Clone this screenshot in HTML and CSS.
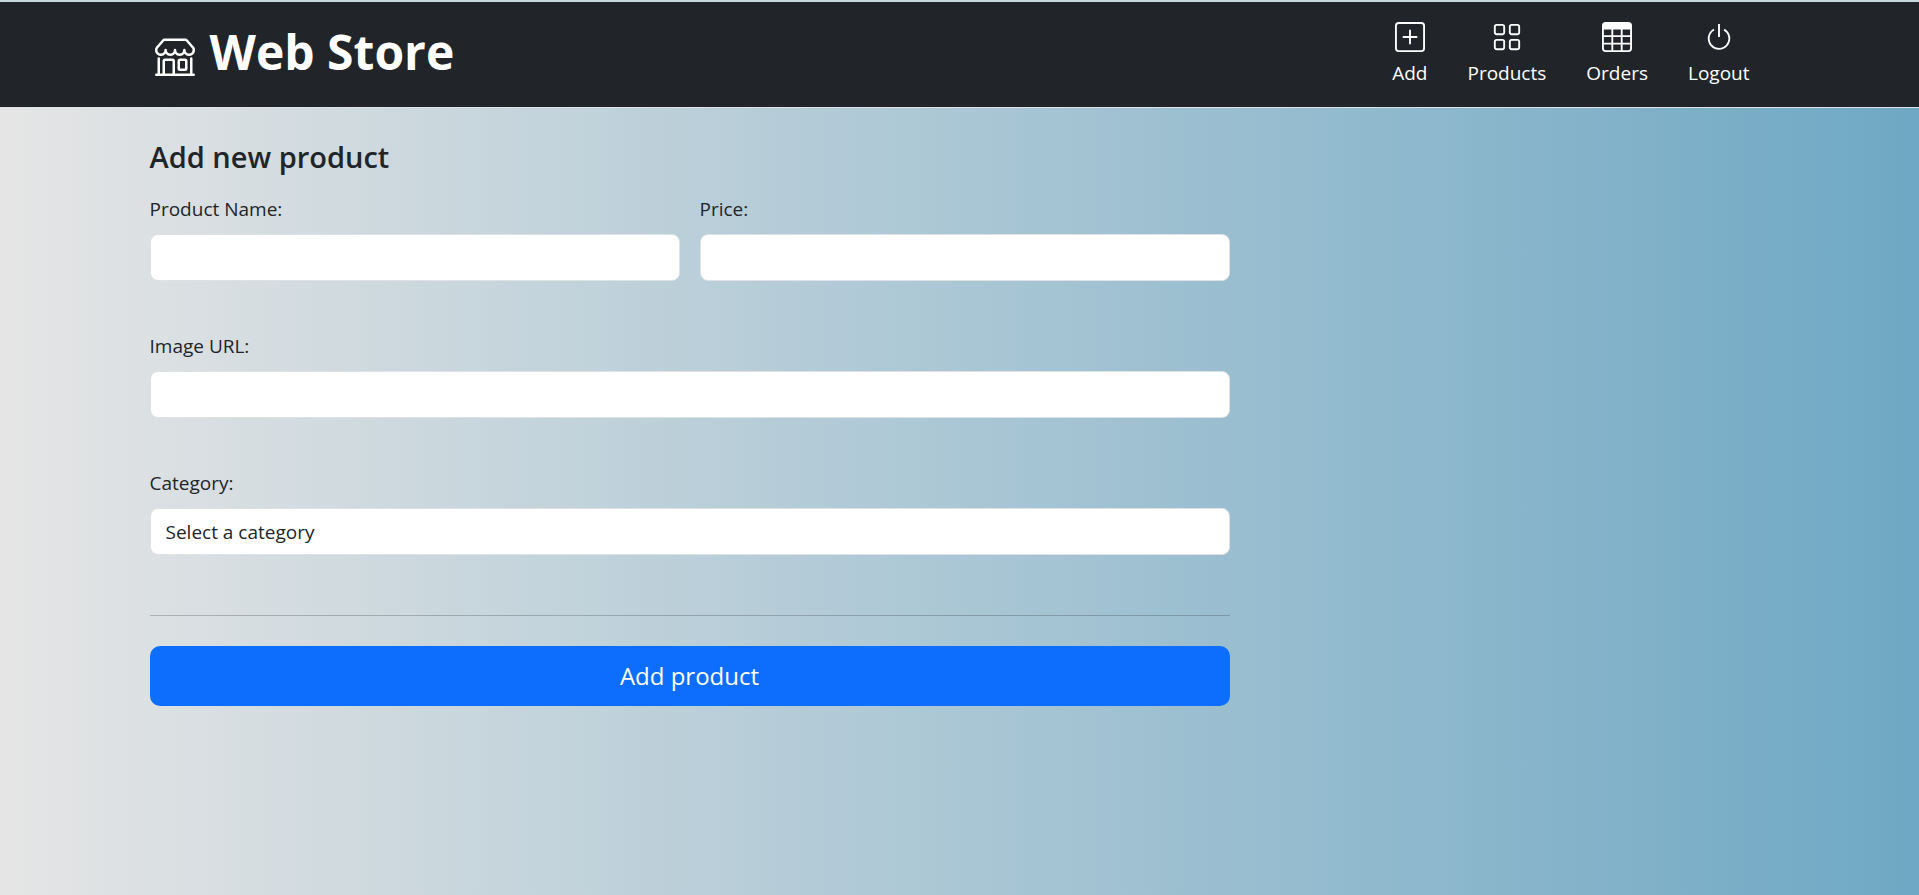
FILE: index.html
```html
<!DOCTYPE html>
<html lang="en">
<head>
<meta charset="utf-8">
<title>Web Store</title>
<link rel="stylesheet" href="styles.css">
</head>
<body>
<header class="site-header">
  <div class="container header-row">
    <a class="brand" href="#">
      <svg class="brand-icon" viewBox="0 0 16 16" fill="currentColor" aria-hidden="true"><path d="M2.97 1.35A1 1 0 0 1 3.73 1h8.54a1 1 0 0 1 .76.35l2.609 3.044A1.500 1.500 0 0 1 16 5.370v.255a2.375 2.375 0 0 1-4.250 1.458A2.370 2.370 0 0 1 9.875 8 2.370 2.370 0 0 1 8 7.083 2.370 2.370 0 0 1 6.125 8a2.370 2.370 0 0 1-1.875-.917A2.375 2.375 0 0 1 0 5.625V5.370a1.500 1.500 0 0 1 .361-.976zm1.780 4.275a1.375 1.375 0 0 0 2.750 0 .5.5 0 0 1 1 0 1.375 1.375 0 0 0 2.750 0 .5.5 0 0 1 1 0 1.375 1.375 0 1 0 2.750 0V5.370a.5.5 0 0 0-.120-.325L12.270 2H3.730L1.120 5.045A.5.5 0 0 0 1 5.370v.255a1.375 1.375 0 0 0 2.750 0 .5.5 0 0 1 1 0M1.500 8.500A.5.5 0 0 1 2 9v6h1v-5a1 1 0 0 1 1-1h3a1 1 0 0 1 1 1v5h6V9a.5.5 0 0 1 1 0v6h.5a.5.5 0 0 1 0 1H.5a.5.5 0 0 1 0-1H1V9a.5.5 0 0 1 .5-.5M4 15h3v-5H4zm5-5a1 1 0 0 1 1-1h2a1 1 0 0 1 1 1v3a1 1 0 0 1-1 1h-2a1 1 0 0 1-1-1zm3 0h-2v3h2z"/></svg>
      <span class="brand-name">Web Store</span>
    </a>
    <nav class="nav">
      <a class="nav-link" href="#"><svg class="nav-icon" viewBox="0 0 16 16" fill="currentColor" aria-hidden="true"><path d="M14 1a1 1 0 0 1 1 1v12a1 1 0 0 1-1 1H2a1 1 0 0 1-1-1V2a1 1 0 0 1 1-1zM2 0a2 2 0 0 0-2 2v12a2 2 0 0 0 2 2h12a2 2 0 0 0 2-2V2a2 2 0 0 0-2-2z"/><path d="M8 4a.5.5 0 0 1 .5.5v3h3a.5.5 0 0 1 0 1h-3v3a.5.5 0 0 1-1 0v-3h-3a.5.5 0 0 1 0-1h3v-3A.5.5 0 0 1 8 4"/></svg>Add</a>
      <a class="nav-link" href="#"><svg class="nav-icon" viewBox="0 0 16 16" fill="currentColor" aria-hidden="true"><path d="M1 2.500A1.500 1.500 0 0 1 2.500 1h3A1.500 1.500 0 0 1 7 2.500v3A1.500 1.500 0 0 1 5.500 7h-3A1.500 1.500 0 0 1 1 5.500zM2.500 2a.5.5 0 0 0-.5.5v3a.5.5 0 0 0 .5.5h3a.5.5 0 0 0 .5-.5v-3a.5.5 0 0 0-.5-.5zm6.500.5A1.500 1.500 0 0 1 10.500 1h3A1.500 1.500 0 0 1 15 2.500v3A1.500 1.500 0 0 1 13.500 7h-3A1.500 1.500 0 0 1 9 5.500zm1.500-.5a.5.5 0 0 0-.5.5v3a.5.5 0 0 0 .5.5h3a.5.5 0 0 0 .5-.5v-3a.5.5 0 0 0-.5-.5zM1 10.500A1.500 1.500 0 0 1 2.500 9h3A1.500 1.500 0 0 1 7 10.500v3A1.500 1.500 0 0 1 5.500 15h-3A1.500 1.500 0 0 1 1 13.500zm1.500-.5a.5.5 0 0 0-.5.5v3a.5.5 0 0 0 .5.5h3a.5.5 0 0 0 .5-.5v-3a.5.5 0 0 0-.5-.5zm6.500.5A1.500 1.500 0 0 1 10.500 9h3a1.500 1.500 0 0 1 1.500 1.500v3a1.500 1.500 0 0 1-1.500 1.500h-3A1.500 1.500 0 0 1 9 13.500zm1.500-.5a.5.5 0 0 0-.5.5v3a.5.5 0 0 0 .5.5h3a.5.5 0 0 0 .5-.5v-3a.5.5 0 0 0-.5-.5z"/></svg>Products</a>
      <a class="nav-link" href="#"><svg class="nav-icon" viewBox="0 0 16 16" fill="currentColor" aria-hidden="true"><path d="M0 2a2 2 0 0 1 2-2h12a2 2 0 0 1 2 2v12a2 2 0 0 1-2 2H2a2 2 0 0 1-2-2zm15 2h-4v3h4zm0 4h-4v3h4zm0 4h-4v3h3a1 1 0 0 0 1-1zm-5 3v-3H6v3zm-5 0v-3H1v2a1 1 0 0 0 1 1zm-4-4h4V8H1zm0-4h4V4H1zm5-3v3h4V4zm4 4H6v3h4z"/></svg>Orders</a>
      <a class="nav-link" href="#"><svg class="nav-icon" viewBox="0 0 16 16" fill="currentColor" aria-hidden="true"><path d="M7.500 1v7h1V1z"/><path d="M3 8.812a5 5 0 0 1 2.578-4.375l-.485-.874A6 6 0 1 0 11 3.616l-.501.865A5 5 0 1 1 3 8.812"/></svg>Logout</a>
    </nav>
  </div>
</header>
<main class="container">
  <form class="product-form">
    <h1 class="form-title">Add new product</h1>
    <div class="field-row">
      <div class="field"><label for="name">Product Name:</label><input class="control" id="name" type="text"></div>
      <div class="field"><label for="price">Price:</label><input class="control" id="price" type="text"></div>
    </div>
    <div class="field"><label for="image">Image URL:</label><input class="control" id="image" type="text"></div>
    <div class="field"><label for="category">Category:</label><select class="control" id="category"><option>Select a category</option></select></div>
    <hr class="divider">
    <button class="submit" type="submit">Add product</button>
  </form>
</main>
</body>
</html>
```
FILE: styles.css
```css
* { box-sizing: border-box; }

body {
  margin: 0;
  min-height: 100vh;
  background: linear-gradient(to right, #e5e5e5, #6fa8c4);
  color: #212529;
  font-family: "Segoe UI", "Open Sans", "Noto Sans", sans-serif;
  font-size: 19px;
  line-height: 30px;
}

.container {
  max-width: 1650px;
  margin: 0 auto;
  padding: 0 15px;
}

.site-header {
  background: #212529;
  border-top: 2px solid #c3d9dc;
  border-bottom: 1px solid #dee2e6;
}

.header-row {
  display: flex;
  justify-content: space-between;
  align-items: center;
  height: 105px;
}

.brand {
  display: flex;
  align-items: flex-end;
  gap: 15px;
  padding: 0 0 6px 5px;
  color: #fff;
  text-decoration: none;
}

.brand-icon {
  width: 40px;
  height: 40px;
  margin-bottom: 4px;
}

.brand-name {
  font-size: 48px;
  font-weight: 700;
  line-height: 56px;
}

.nav { display: flex; }

.nav-link {
  display: flex;
  flex-direction: column;
  align-items: center;
  gap: 6px;
  padding: 10px 20px;
  color: #fff;
  text-decoration: none;
}

.nav-icon { width: 30px; height: 30px; }

.product-form {
  width: 66.6667%;
  padding-top: 30px;
}

.form-title {
  margin: 0 0 18px;
  font-size: 29px;
  font-weight: 600;
  line-height: 38px;
}

.field-row {
  display: grid;
  grid-template-columns: 1fr 1fr;
  gap: 20px;
}

.field {
  display: flex;
  flex-direction: column;
  gap: 10px;
  margin-bottom: 50px;
}

.control {
  width: 100%;
  height: 47px;
  padding: 7px 15px;
  border: 1px solid #dee2e6;
  border-radius: 8px;
  background: #fff;
  color: #212529;
  font: inherit;
  appearance: none;
}

.divider {
  margin: 60px 0 30px;
  border: 0;
  border-top: 1px solid #212529;
  opacity: 0.25;
}

.submit {
  width: 100%;
  padding: 11px 20px;
  border: 0;
  border-radius: 10px;
  background: #0d6efd;
  color: #fff;
  font-family: inherit;
  font-size: 24px;
  line-height: 38px;
}
```
